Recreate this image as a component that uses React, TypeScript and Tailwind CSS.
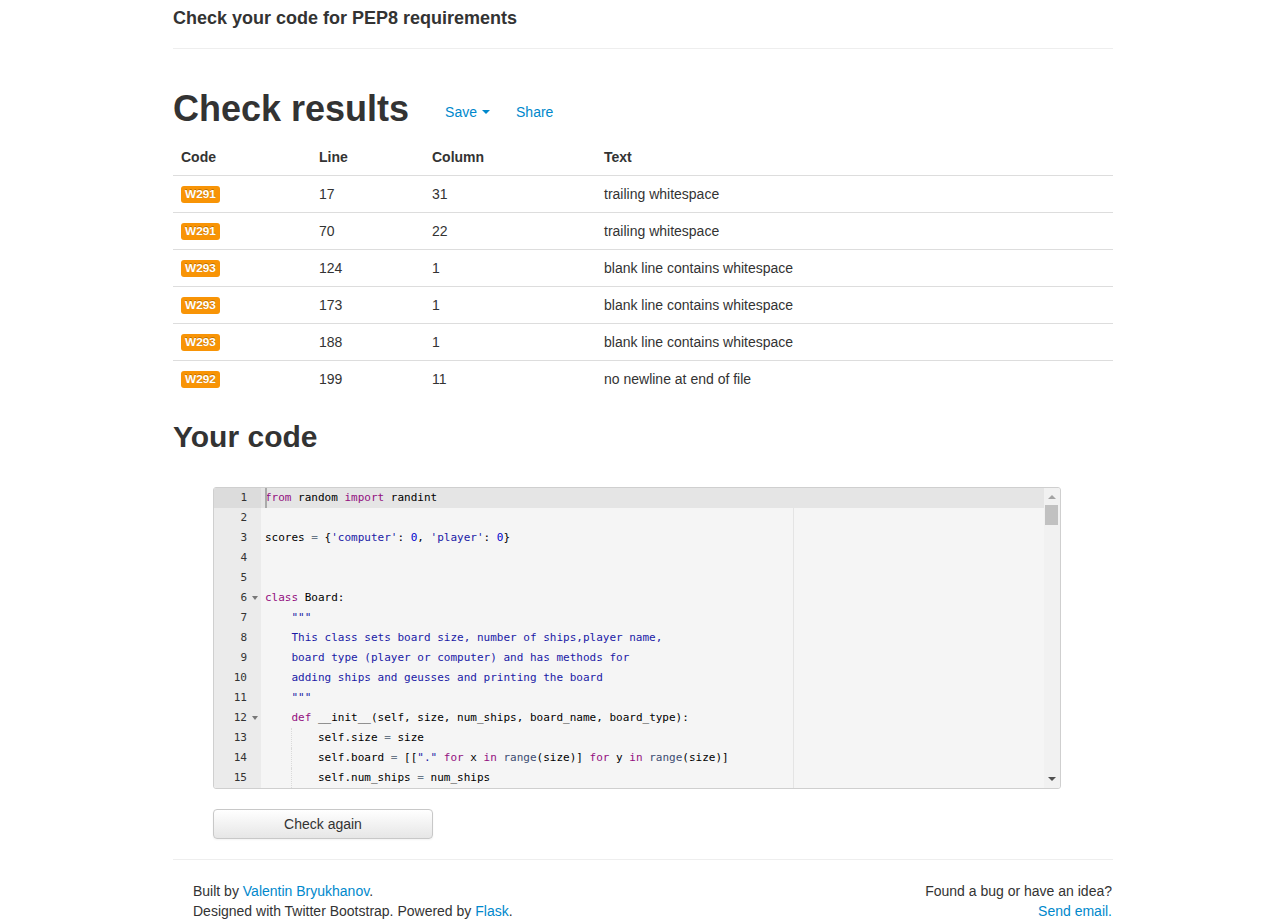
import React from "react";

type Tok = [string, string?];

const K = "text-[rgb(147,15,128)]";
const S = "text-[#1a1aa6]";
const N = "text-[rgb(0,0,205)]";
const O = "text-[rgb(104,118,135)]";
const F = "text-[rgb(60,76,114)]";

const code: { toks: Tok[]; fold?: boolean; guide?: boolean }[] = [
  { toks: [["from", K], [" random "], ["import", K], [" randint"]] },
  { toks: [] },
  {
    toks: [
      ["scores "],
      ["=", O],
      [" {"],
      ["'computer'", S],
      [": "],
      ["0", N],
      [", "],
      ["'player'", S],
      [": "],
      ["0", N],
      ["}"],
    ],
  },
  { toks: [] },
  { toks: [] },
  { toks: [["class", K], [" Board:"]], fold: true },
  { toks: [["    "], ['"""', S]] },
  { toks: [["    "], ["This class sets board size, number of ships,player name,", S]] },
  { toks: [["    "], ["board type (player or computer) and has methods for", S]] },
  { toks: [["    "], ["adding ships and geusses and printing the board", S]] },
  { toks: [["    "], ['"""', S]] },
  {
    toks: [["    "], ["def", K], [" __init__(self, size, num_ships, board_name, board_type):"]],
    fold: true,
  },
  { toks: [["        self.size "], ["=", O], [" size"]], guide: true },
  {
    toks: [
      ["        self.board "],
      ["=", O],
      [" [["],
      ['"."', S],
      [" "],
      ["for", K],
      [" x "],
      ["in", K],
      [" "],
      ["range", F],
      ["(size)] "],
      ["for", K],
      [" y "],
      ["in", K],
      [" "],
      ["range", F],
      ["(size)]"],
    ],
    guide: true,
  },
  { toks: [["        self.num_ships "], ["=", O], [" num_ships"]], guide: true },
];

const rows = [
  ["W291", "17", "31", "trailing whitespace"],
  ["W291", "70", "22", "trailing whitespace"],
  ["W293", "124", "1", "blank line contains whitespace"],
  ["W293", "173", "1", "blank line contains whitespace"],
  ["W293", "188", "1", "blank line contains whitespace"],
  ["W292", "199", "11", "no newline at end of file"],
];

function Editor() {
  return (
    <div className="ml-10 w-[848px] h-[302px] border border-[#cfcfcf] rounded-[3px] overflow-hidden flex bg-[#f5f5f5]">
      {/* gutter */}
      <div className="w-[47px] bg-[#ebebeb] text-[#333] flex flex-col shrink-0">
        {code.map((l, i) => (
          <div
            key={i}
            className={`relative h-5 leading-5 text-right pr-[14px] text-[11px] ${i === 0 ? "bg-[#dcdcdc]" : ""}`}
            style={{ fontFamily: '"DejaVu Sans Mono", monospace' }}
          >
            {i + 1}
            {l.fold && (
              <span className="absolute right-[3px] top-[8px] w-0 h-0 border-l-[3px] border-r-[3px] border-t-[4px] border-l-transparent border-r-transparent border-t-[#777]" />
            )}
          </div>
        ))}
      </div>
      {/* content */}
      <div className="relative flex-1 flex flex-col">
        <div className="absolute left-[532px] top-0 bottom-0 w-px bg-[#e4e4e4]" />
        {code.map((l, i) => (
          <div
            key={i}
            className={`relative h-5 leading-5 pl-1 whitespace-pre text-[11px] text-black ${i === 0 ? "bg-[#e5e5e5]" : ""}`}
            style={{ fontFamily: '"DejaVu Sans Mono", monospace' }}
          >
            {l.guide && (
              <span className="absolute left-[30px] top-0 bottom-0 border-l border-dotted border-[#dadada]" />
            )}
            {i === 0 && <span className="absolute left-1 top-0 w-[2px] h-5 bg-[#aaa]" />}
            {l.toks.map((t, j) => (
              <span key={j} className={t[1] ?? ""}>
                {t[0]}
              </span>
            ))}
          </div>
        ))}
      </div>
      {/* scrollbar */}
      <div className="w-4 shrink-0 bg-[#f1f1f1] relative">
        <span className="absolute left-[4px] top-[7px] w-0 h-0 border-l-[4px] border-r-[4px] border-b-[4px] border-l-transparent border-r-transparent border-b-[#a3a3a3]" />
        <div className="absolute left-[1px] top-[17px] w-[13px] h-5 bg-[#c1c1c1]" />
        <span className="absolute left-[4px] bottom-[7px] w-0 h-0 border-l-[4px] border-r-[4px] border-t-[4px] border-l-transparent border-r-transparent border-t-[#505050]" />
      </div>
    </div>
  );
}

export default function App() {
  return (
    <div
      className="bg-white text-[#333] text-[14px] leading-5 min-h-[921px]"
      style={{ fontFamily: '"Liberation Sans", Arial, Helvetica, sans-serif' }}
    >
      <div className="w-[940px] ml-[173px]">
        <div className="pt-2">
          <h4 className="text-[18px] font-bold leading-5">Check your code for PEP8 requirements</h4>
          <hr className="mt-5 border-0 border-t border-[#eeeeee]" />
        </div>

        <div className="mt-10 flex items-center">
          <h1 className="text-[36px] font-bold leading-10">Check results</h1>
          <a className="ml-9 mt-[5px] text-[#0088cc] flex items-center cursor-pointer">
            Save
            <span className="ml-[5px] mt-px w-0 h-0 border-l-[4px] border-r-[4px] border-t-[4px] border-l-transparent border-r-transparent border-t-[#0088cc]" />
          </a>
          <a className="ml-[26px] mt-[5px] text-[#0088cc] cursor-pointer">Share</a>
        </div>

        <table className="mt-[10px] w-full border-collapse">
          <thead>
            <tr>
              <th className="w-[138px] text-left font-bold px-2 py-2 leading-5">Code</th>
              <th className="w-[113px] text-left font-bold px-2 py-2 leading-5">Line</th>
              <th className="w-[172px] text-left font-bold px-2 py-2 leading-5">Column</th>
              <th className="text-left font-bold px-2 py-2 leading-5">Text</th>
            </tr>
          </thead>
          <tbody>
            {rows.map((r, i) => (
              <tr key={i} className="border-t border-[#dddddd]">
                <td className="px-2 py-2 leading-5 h-[37px]">
                  <span className="inline-block align-top mt-[2px] bg-[#f89406] text-white font-bold text-[11.8px] leading-[13px] px-1 py-[2px] rounded-[3px] [text-shadow:0_-1px_0_rgba(0,0,0,0.25)]">
                    {r[0]}
                  </span>
                </td>
                <td className="px-2 py-2 leading-5">{r[1]}</td>
                <td className="px-2 py-2 leading-5">{r[2]}</td>
                <td className="px-2 py-2 leading-5">{r[3]}</td>
              </tr>
            ))}
          </tbody>
        </table>

        <h2 className="mt-[19px] text-[30px] font-bold leading-10">Your code</h2>

        <div className="mt-[30px]">
          <Editor />
        </div>

        <div className="mt-5 ml-10">
          <button className="w-[220px] h-[30px] border border-[#c8c8c8] rounded-[4px] bg-gradient-to-b from-white to-[#e6e6e6] text-[#333] text-[14px] shadow-[inset_0_1px_0_rgba(255,255,255,0.2),0_1px_2px_rgba(0,0,0,0.05)]">
            Check again
          </button>
        </div>

        <hr className="mt-5 border-0 border-t border-[#eeeeee]" />

        <div className="pt-[21px] flex justify-between">
          <div className="pl-5">
            <p>
              Built by <a className="text-[#0088cc]">Valentin Bryukhanov</a>.
            </p>
            <p>
              Designed with Twitter Bootstrap. Powered by <a className="text-[#0088cc]">Flask</a>.
            </p>
          </div>
          <div className="text-right pr-px">
            <p>Found a bug or have an idea?</p>
            <p>
              <a className="text-[#0088cc]">Send email.</a>
            </p>
          </div>
        </div>
      </div>
    </div>
  );
}
